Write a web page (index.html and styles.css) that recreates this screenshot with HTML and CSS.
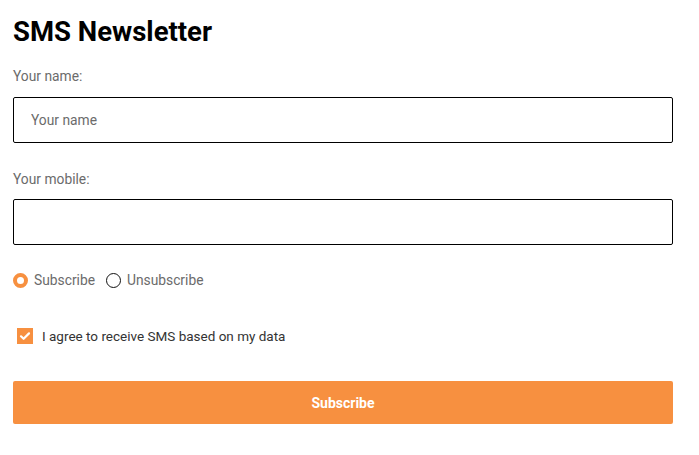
FILE: index.html
```html
<!DOCTYPE html>
<html>
<head>
<meta charset="utf-8">
<link rel="stylesheet" href="styles.css">
</head>
<body>
<form class="form">
  <h1 class="title">SMS Newsletter</h1>
  <label class="label" for="name">Your name:</label>
  <input class="field" id="name" type="text" placeholder="Your name">
  <label class="label label-mobile" for="mobile">Your mobile:</label>
  <input class="field field-mobile" id="mobile" type="text">
  <div class="radios">
    <label class="radio-item"><input class="radio" type="radio" name="mode" checked><span>Subscribe</span></label>
    <label class="radio-item"><input class="radio" type="radio" name="mode"><span>Unsubscribe</span></label>
  </div>
  <label class="agree">
    <span class="box"><svg viewBox="0 0 16 16" width="16" height="16"><path d="M4 8.3l2.6 2.5L12 5.4" fill="none" stroke="#fff" stroke-width="2.2" stroke-linecap="round" stroke-linejoin="round"/></svg></span>
    <span>I agree to receive SMS based on my data</span>
  </label>
  <button class="submit" type="button">Subscribe</button>
</form>
</body>
</html>
```
FILE: styles.css
```css
* { box-sizing: border-box; }
html, body { margin: 0; background: #fff; }
body { font-family: Roboto, "Liberation Sans", sans-serif; }
.form {
  display: flex;
  flex-direction: column;
  padding: 14px 26px 0 13px;
}
.title {
  margin: 0;
  font-size: 27.5px;
  line-height: 36px;
  font-weight: 700;
  color: #000;
}
.label {
  margin-top: 14px;
  font-size: 13.8px;
  line-height: 24px;
  color: #6b6b6b;
}
.label-mobile { margin-top: 24px; }
.field {
  margin-top: 9px;
  height: 46px;
  border: 1px solid #000;
  border-radius: 2px;
  padding: 0 17px;
  font-family: inherit;
  font-size: 13.8px;
  color: #333;
  outline: none;
}
.field::placeholder { color: #6b6b6b; }
.field-mobile { margin-top: 8px; }
.radios {
  margin-top: 24px;
  height: 22px;
  display: flex;
  align-items: center;
  gap: 11px;
}
.radio-item {
  display: flex;
  align-items: center;
  gap: 6px;
  font-size: 13.8px;
  color: #6b6b6b;
}
.radio {
  appearance: none;
  margin: 0;
  width: 15px;
  height: 15px;
  border-radius: 50%;
  border: 1.5px solid #111;
  background: #fff;
}
.radio:checked { border: 4px solid #f79040; }
.agree {
  margin-top: 34px;
  height: 22px;
  display: flex;
  align-items: center;
  gap: 9px;
  padding-left: 4px;
  font-size: 13.5px;
  color: #333;
}
.box {
  width: 16px;
  height: 16px;
  background: #f79040;
  display: flex;
}
.submit {
  margin-top: 34px;
  height: 43px;
  border: 0;
  border-radius: 2px;
  background: #f79040;
  color: #fff;
  font-family: inherit;
  font-weight: 700;
  font-size: 14px;
}
```
